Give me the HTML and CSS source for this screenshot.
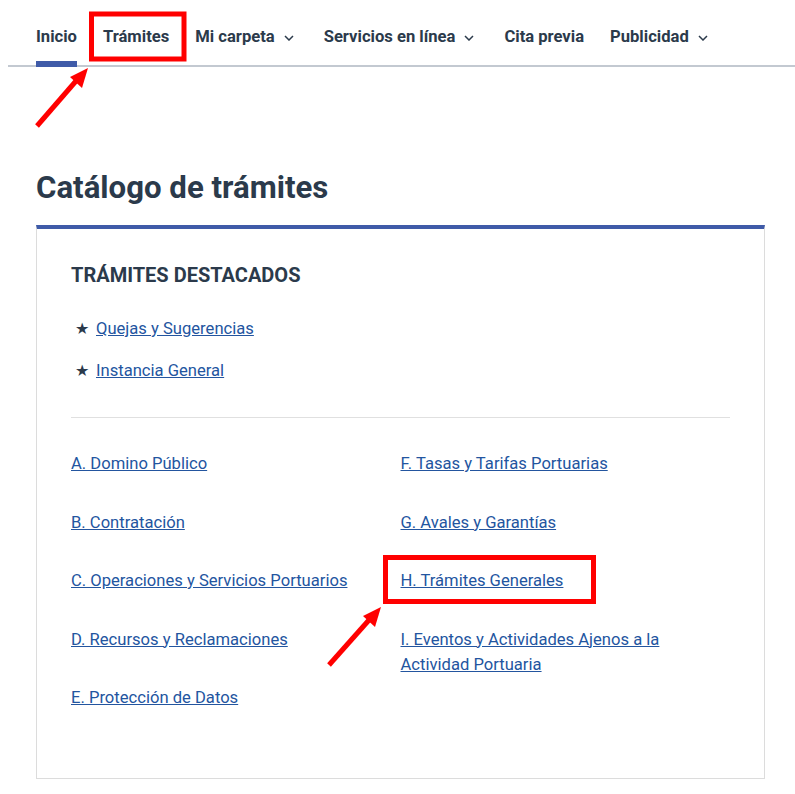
FILE: index.html
```html
<!DOCTYPE html>
<html lang="es">
<head>
    <meta charset="UTF-8">
    <title>Catálogo de trámites</title>
    <link rel="stylesheet" href="styles.css">
</head>
<body>
<nav class="main-nav">
    <ul class="nav-list">
        <li class="nav-item active"><a href="#">Inicio</a></li>
        <li class="nav-item"><a href="#">Trámites</a></li>
        <li class="nav-item"><a href="#">Mi carpeta</a><svg class="chevron" viewBox="0 0 10 6"><path d="M1 1l4 4 4-4"/></svg></li>
        <li class="nav-item"><a href="#">Servicios en línea</a><svg class="chevron" viewBox="0 0 10 6"><path d="M1 1l4 4 4-4"/></svg></li>
        <li class="nav-item"><a href="#">Cita previa</a></li>
        <li class="nav-item"><a href="#">Publicidad</a><svg class="chevron" viewBox="0 0 10 6"><path d="M1 1l4 4 4-4"/></svg></li>
    </ul>
</nav>

<main class="content">
    <h1 class="page-title">Catálogo de trámites</h1>

    <section class="catalog-card">
        <h2 class="card-title">TRÁMITES DESTACADOS</h2>
        <ul class="featured-list">
            <li><span class="star">★</span><a href="#">Quejas y Sugerencias</a></li>
            <li><span class="star">★</span><a href="#">Instancia General</a></li>
        </ul>
        <hr class="divider">
        <div class="catalog-columns">
            <ul class="catalog-list">
                <li><a href="#">A. Domino Público</a></li>
                <li><a href="#">B. Contratación</a></li>
                <li><a href="#">C. Operaciones y Servicios Portuarios</a></li>
                <li><a href="#">D. Recursos y Reclamaciones</a></li>
                <li><a href="#">E. Protección de Datos</a></li>
            </ul>
            <ul class="catalog-list">
                <li><a href="#">F. Tasas y Tarifas Portuarias</a></li>
                <li><a href="#">G. Avales y Garantías</a></li>
                <li><a href="#">H. Trámites Generales</a></li>
                <li><a href="#">I. Eventos y Actividades Ajenos a la Actividad Portuaria</a></li>
            </ul>
        </div>
    </section>
</main>

<!-- anotaciones de la captura -->
<svg class="annotations" width="795" height="794" viewBox="0 0 795 794">
    <rect x="91.5" y="14" width="92.5" height="45" />
    <rect x="385.5" y="557.5" width="208" height="44" />
    <line x1="37" y1="126" x2="76" y2="81" />
    <polygon points="88,68 70,77 82,88" />
    <line x1="329" y1="665" x2="369" y2="620" />
    <polygon points="381,607 363,616 375,627" />
</svg>
</body>
</html>
```

FILE: styles.css
```css
html, body {
    margin: 0;
    background: #fff;
    font-family: Roboto, 'Noto Sans', sans-serif;
    color: #2b3a4b;
}

body {
    position: relative;
    min-height: 794px;
}

.main-nav {
    margin-left: 8px;
    border-bottom: 2px solid #c3c9d1;
}

.nav-list {
    list-style: none;
    margin: 0;
    padding: 0 0 0 28px;
    display: flex;
    gap: 26px;
}

.nav-item {
    display: flex;
    align-items: center;
    padding: 25px 0 12px;
    line-height: 24px;
    border-bottom: 6px solid transparent;
    margin-bottom: -2px;
}

.nav-item a {
    color: #2b3a4b;
    text-decoration: none;
    font-size: 16.6px;
    font-weight: 700;
}

.nav-item.active {
    border-bottom-color: #3f5ba8;
}

.chevron {
    width: 10px;
    height: 6px;
    margin: 2px 4px 0 9px;
    fill: none;
    stroke: #2b3a4b;
    stroke-width: 1.5;
}

.content {
    padding: 0 30px 0 36px;
}

.page-title {
    margin: 101px 0 17px;
    font-size: 31.2px;
    font-weight: 700;
    line-height: 40px;
}

.catalog-card {
    border: 1px solid #dcdcdc;
    border-top: 4px solid #3f5ba8;
    padding: 31px 34px 67px;
}

.card-title {
    margin: 0 0 26px;
    font-size: 20px;
    font-weight: 700;
    line-height: 30px;
}

.featured-list {
    list-style: none;
    margin: 0;
    padding: 0 0 0 4px;
}

.featured-list li {
    display: flex;
    align-items: center;
    gap: 7px;
    line-height: 26px;
    margin-bottom: 16px;
    font-size: 16.6px;
}

.star {
    font-size: 16px;
    color: #2b3a4b;
}

.featured-list a,
.catalog-list a {
    color: #23559f;
}

.divider {
    border: 0;
    border-top: 1px solid #e0e0e0;
    margin: 33px 0 33px;
}

.catalog-columns {
    display: grid;
    grid-template-columns: 1fr 1fr;
}

.catalog-list {
    list-style: none;
    margin: 0;
    padding: 0;
}

.catalog-list li {
    font-size: 16.6px;
    line-height: 25.5px;
    margin-bottom: 33px;
}

.catalog-list li:last-child {
    margin-bottom: 0;
}

.annotations {
    position: absolute;
    top: 0;
    left: 0;
    pointer-events: none;
}

.annotations rect {
    fill: none;
    stroke: #f00;
    stroke-width: 5;
}

.annotations line {
    stroke: #f00;
    stroke-width: 5;
}

.annotations polygon {
    fill: #f00;
}
```
